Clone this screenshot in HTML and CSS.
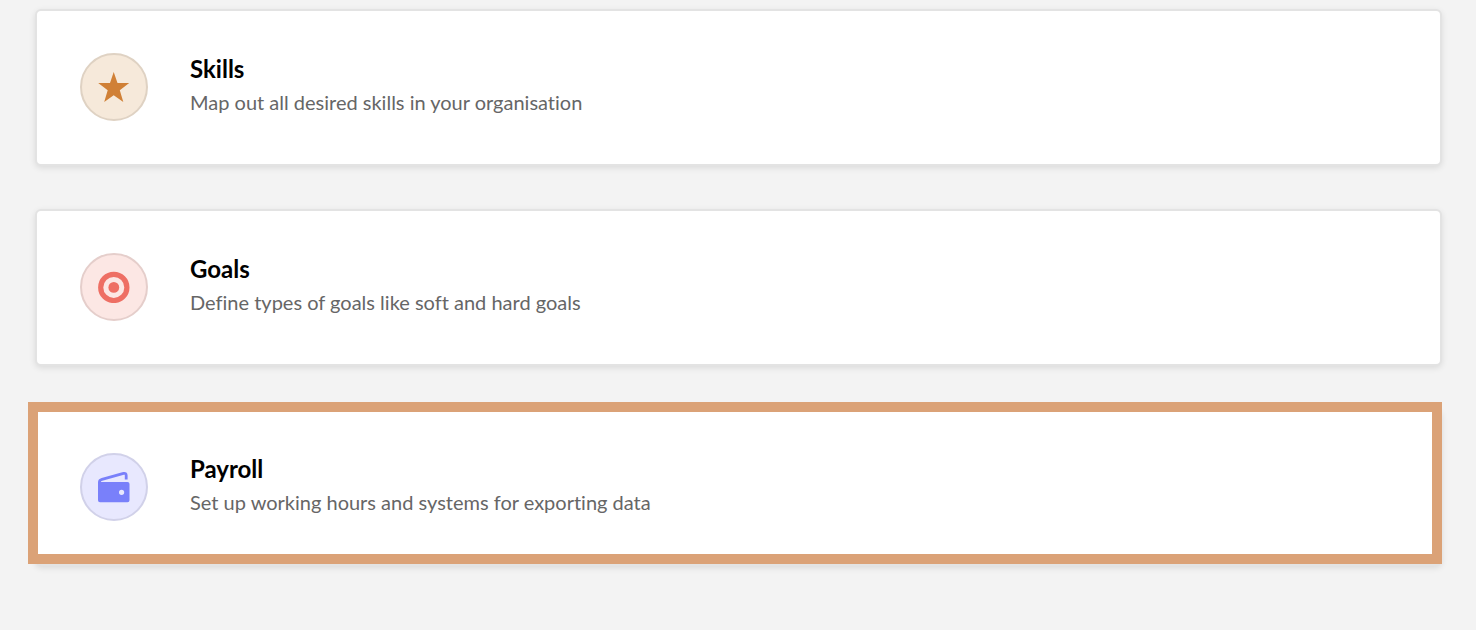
FILE: index.html
```html
<!DOCTYPE html>
<html lang="en">
<head>
<meta charset="utf-8">
<meta name="viewport" content="width=device-width, initial-scale=1">
<title>Settings</title>
<link rel="stylesheet" href="styles.css">
</head>
<body>
<main class="settings">
  <a class="card" href="#skills">
    <span class="badge badge-skills">
      <svg class="icon" viewBox="0 0 32 32" aria-hidden="true"><path fill="currentColor" d="M15.7 1 19.5 12.1H31.2L21.8 19.3 25.3 31 15.7 24.2 6.2 31 9.7 19.3.2 12.1H12Z"/></svg>
    </span>
    <span class="text">
      <strong class="title">Skills</strong>
      <span class="description">Map out all desired skills in your organisation</span>
    </span>
  </a>
  <a class="card" href="#goals">
    <span class="badge badge-goals">
      <svg class="icon" viewBox="0 0 32 32" aria-hidden="true"><circle cx="15.8" cy="16.4" r="13.1" fill="none" stroke="currentColor" stroke-width="5.2"/><circle cx="15.8" cy="16.4" r="5.4" fill="currentColor"/></svg>
    </span>
    <span class="text">
      <strong class="title">Goals</strong>
      <span class="description">Define types of goals like soft and hard goals</span>
    </span>
  </a>
  <a class="card card-highlighted" href="#payroll">
    <span class="badge badge-payroll">
      <svg class="icon" viewBox="0 0 32 32" aria-hidden="true"><path fill="none" stroke="currentColor" stroke-width="2.8" d="M1.4 14V11.3Q1.4 9.1 4 8.4L25.5 2.4Q28.2 1.8 28.2 4.4V8.4"/><path fill="currentColor" fill-rule="evenodd" d="M2.1 11H29.5Q31.5 11 31.5 13V29.2Q31.5 31.2 29.5 31.2H2Q0 31.2 0 29.2V11.5ZM23.6 18.7A2.6 2.6 0 1 0 23.6 23.9 2.6 2.6 0 1 0 23.6 18.7Z"/></svg>
    </span>
    <span class="text">
      <strong class="title">Payroll</strong>
      <span class="description">Set up working hours and systems for exporting data</span>
    </span>
  </a>
</main>
</body>
</html>
```
FILE: styles.css
```css
* {
  box-sizing: border-box;
}

body {
  margin: 0;
  background: #f3f3f3;
  font-family: Lato, "Open Sans", sans-serif;
  font-variant-ligatures: none;
}

.settings {
  display: flex;
  flex-direction: column;
  gap: 43px;
  padding: 9px 34px 40px 35px;
}

.card {
  position: relative;
  display: flex;
  align-items: center;
  gap: 42px;
  padding: 41px 43px 42px;
  border: 2px solid #e3e3e3;
  border-radius: 6px;
  background: #fff;
  box-shadow: 0 2px 6px rgba(0, 0, 0, 0.1);
  color: #000;
  text-decoration: none;
}

.card-highlighted::after {
  content: "";
  position: absolute;
  inset: -9px -2px 0 -9px;
  border: 10px solid #dba277;
}

.badge {
  display: flex;
  flex: none;
  align-items: center;
  justify-content: center;
  width: 68px;
  height: 68px;
  border: 2px solid;
  border-radius: 50%;
}

.badge-skills {
  border-color: #dfd2c3;
  background: #f6e9da;
}

.badge-goals {
  border-color: #e5cecb;
  background: #fce7e4;
}

.badge-payroll {
  border-color: #d1d1e9;
  background: #e8e8fe;
}

.icon {
  width: 32px;
  height: 32px;
}

.badge-skills .icon {
  color: #d08036;
}

.badge-goals .icon {
  color: #ee6f64;
}

.badge-payroll .icon {
  color: #7980fa;
}

.text {
  display: flex;
  flex-direction: column;
  padding-bottom: 4px;
}

.title {
  font-size: 24px;
  font-weight: 700;
  line-height: 34px;
}

.description {
  color: #666;
  font-size: 20px;
  line-height: 32px;
}
```
